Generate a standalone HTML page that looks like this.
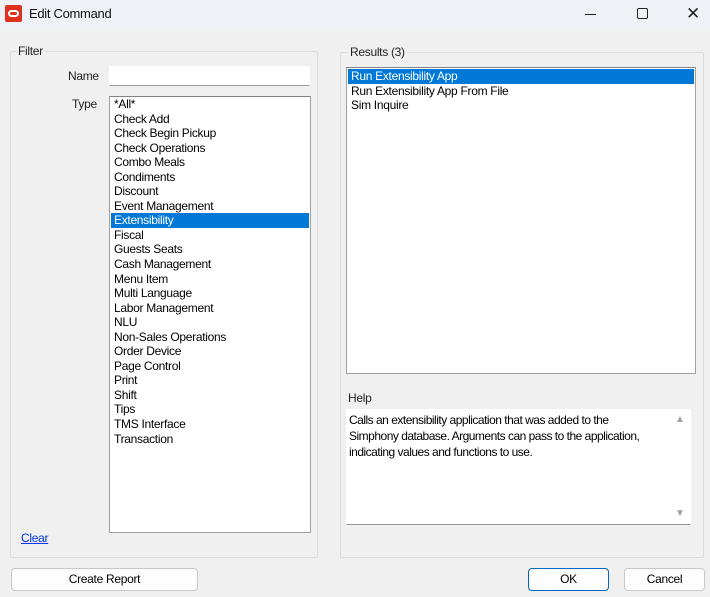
<!DOCTYPE html>
<html><head><style>
*{margin:0;padding:0;box-sizing:border-box}
body{width:710px;height:597px;background:#f0f0f0;font-family:"Liberation Sans",sans-serif;font-size:12px;color:#000;position:relative;overflow:hidden;letter-spacing:-0.3px}
.abs{position:absolute}
.title{left:0;top:0;width:710px;height:30px;background:#eff1f6}
.grp{border:1px solid #dcdcdc;border-radius:2px}
.lbl{background:#f0f0f0;padding:0 2px;color:#222}
.box{background:#fff;border:1px solid #a0a0a0;border-top-color:#838383}
.row{height:14.55px;line-height:14.5px;padding-left:3px;white-space:nowrap}
.sel{background:#0078d7;color:#fff}
.btn{background:#fdfdfd;border:1px solid #c8c8c8;border-radius:4px;text-align:center;line-height:21px;font-size:12px}
</style></head><body>
<div class="abs title">
 <div class="abs" style="left:5px;top:5px;width:17px;height:17px;background:#e0301e;border-radius:2px"></div>
 <div class="abs" style="left:8px;top:10px;width:11px;height:7px;border:2px solid #fff;border-radius:4px"></div>
 <div class="abs" style="left:29px;top:6px;font-size:13px;color:#111">Edit Command</div>
 <div class="abs" style="left:585px;top:14px;width:11px;height:1px;background:#222"></div>
 <div class="abs" style="left:637px;top:8px;width:11px;height:11px;border:1.5px solid #222;border-radius:2px"></div>
 <div class="abs" style="left:686px;top:4px;font-size:17px;color:#222;font-weight:300">✕</div>
</div>
<div class="abs grp" style="left:10px;top:51px;width:308px;height:507px"></div>
<div class="abs lbl" style="left:16px;top:44px">Filter</div>
<div class="abs" style="left:68px;top:69px;color:#222">Name</div>
<div class="abs box" style="left:109px;top:66px;width:201px;height:20px;border-color:#fff;border-bottom-color:#999"></div>
<div class="abs" style="left:72px;top:97px;color:#222">Type</div>
<div class="abs box" style="left:109px;top:96px;width:202px;height:437px;padding:0 1px">
<div class="row">*All*</div><div class="row">Check Add</div><div class="row">Check Begin Pickup</div><div class="row">Check Operations</div><div class="row">Combo Meals</div><div class="row">Condiments</div><div class="row">Discount</div><div class="row">Event Management</div><div class="row sel">Extensibility</div><div class="row">Fiscal</div><div class="row">Guests Seats</div><div class="row">Cash Management</div><div class="row">Menu Item</div><div class="row">Multi Language</div><div class="row">Labor Management</div><div class="row">NLU</div><div class="row">Non-Sales Operations</div><div class="row">Order Device</div><div class="row">Page Control</div><div class="row">Print</div><div class="row">Shift</div><div class="row">Tips</div><div class="row">TMS Interface</div><div class="row">Transaction</div>
</div>
<div class="abs" style="left:21px;top:531px;color:#0033ee;text-decoration:underline">Clear</div>
<div class="abs grp" style="left:340px;top:52px;width:364px;height:506px"></div>
<div class="abs lbl" style="left:348px;top:45px">Results (3)</div>
<div class="abs box" style="left:346px;top:67px;width:350px;height:307px;padding:1px">
<div class="row sel">Run Extensibility App</div><div class="row">Run Extensibility App From File</div><div class="row">Sim Inquire</div>
</div>
<div class="abs" style="left:348px;top:391px;color:#222">Help</div>
<div class="abs box" style="left:346px;top:409px;width:345px;height:116px;border-color:#fff;border-bottom-color:#999"></div>
<div class="abs" style="left:349px;top:412px;width:318px;line-height:16px;letter-spacing:-0.5px">Calls an extensibility application that was added to the<br>Simphony database. Arguments can pass to the application,<br>indicating values and functions to use.</div>
<div class="abs" style="left:675px;top:414px;color:#a0a0a0;font-size:10px">▲</div>
<div class="abs" style="left:675px;top:508px;color:#a0a0a0;font-size:10px">▼</div>
<div class="abs btn" style="left:11px;top:568px;width:187px;height:23px">Create Report</div>
<div class="abs btn" style="left:528px;top:568px;width:81px;height:23px;border:1.5px solid #0067c0">OK</div>
<div class="abs btn" style="left:624px;top:568px;width:81px;height:23px">Cancel</div>
</body></html>
